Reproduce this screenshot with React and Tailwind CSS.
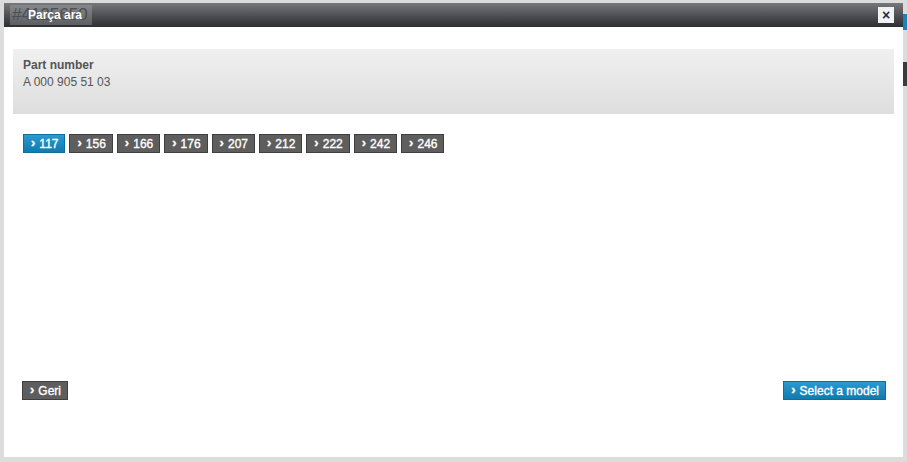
import React from 'react';

const models = ['117', '156', '166', '176', '207', '212', '222', '242', '246'];

const Btn = ({ label, active }) => (
  <button
    className={`h-[19px] pl-[7px] pr-[6px] flex items-center gap-[4px] text-white text-[12px] border leading-none [-webkit-text-stroke:0.35px_white] ${
      active
        ? 'bg-gradient-to-b from-[#2a9ad0] to-[#117aae] border-[#0f6e9e]'
        : 'bg-[#5e5e5e] border-[#3f3f3f]'
    }`}
  >
    <span className="text-[13px] font-bold -mt-[2px]">›</span>
    <span>{label}</span>
  </button>
);

const App = () => {
  return (
    <div className="w-[907px] h-[462px] bg-[#dcdcdc] relative overflow-hidden font-['Liberation_Sans',Arial,sans-serif]">
      {/* page behind the dialog, visible at the right edge */}
      <div className="absolute right-0 top-[14px] w-[4px] h-[16px] bg-[#1a84b8]" />
      <div className="absolute right-0 top-[62px] w-[4px] h-[24px] bg-[#3a3c3f]" />

      <div className="absolute left-[4px] top-[3px] w-[899px] h-[454px] bg-white flex flex-col">
        <div className="h-[24px] bg-gradient-to-b from-[#76787b] to-[#2c2e31] flex items-center justify-between pl-[6px] pr-[9px]">
          <div className="relative h-[20px] w-[82px] bg-gradient-to-b from-[#85878a] to-[#5c5e61] flex items-center">
            <span className="absolute left-[2px] top-[1px] text-[#4b4d50] text-[17px] leading-[18px]">#4125650</span>
            <span className="relative pl-[18px] text-white text-[12px] font-bold">Parça ara</span>
          </div>
          <button className="w-[16px] h-[16px] bg-[#f2f2f2] flex items-center justify-center text-[#1f2a44] text-[14px] font-bold leading-none">
            ×
          </button>
        </div>

        <div className="flex-1 flex flex-col px-[9px] pt-[22px] pb-[57px]">
          <div className="h-[65px] bg-gradient-to-b from-[#f0f0f0] to-[#dedede] px-[10px] pt-[8px]">
            <p className="text-[12px] font-bold text-[#555] leading-[16px]">Part number</p>
            <p className="text-[12px] text-[#555] leading-[18px]">A 000 905 51 03</p>
          </div>

          <div className="flex gap-[4px] pl-[10px] mt-[20px]">
            {models.map((m, i) => (
              <Btn key={m} label={m} active={i === 0} />
            ))}
          </div>

          <div className="flex-1" />

          <div className="flex justify-between pl-[9px] pr-[8px]">
            <Btn label="Geri" />
            <Btn label="Select a model" active />
          </div>
        </div>
      </div>
    </div>
  );
};

export default App;
